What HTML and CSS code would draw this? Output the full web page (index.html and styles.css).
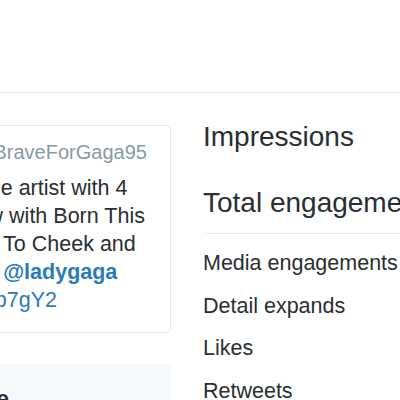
FILE: index.html
```html
<!DOCTYPE html>
<html lang="en">
<head>
  <meta charset="utf-8">
  <title>Tweet activity</title>
  <link rel="stylesheet" href="styles.css">
</head>
<body>
  <div class="header"></div>

  <div class="page">
    <div class="left">
      <div class="tweet">
        <div class="tweet-head"><b class="name">Brave For Gaga ARMY</b> <span class="handle">@BraveForGaga95</span></div>
        <div class="tweet-text">
          Lady Gaga is the first female artist with 4<br>
          consecutive #1 albums now with Born This<br>
          Way, ARTPOP, then Cheek To Cheek and<br>
          Joanne!! congratulations to <a class="mention">@ladygaga</a><br>
          <a class="link">#Joanne</a> <a class="link">https://t.co/4qkLNb7gY2</a>
        </div>
      </div>

      <div class="promote">
        <h3>Reach a bigger audience</h3>
      </div>
    </div>

    <div class="right">
      <div class="metric big">Impressions</div>
      <div class="metric big last">Total engagements</div>
      <div class="details">
        <div class="metric">Media engagements</div>
        <div class="metric">Detail expands</div>
        <div class="metric">Likes</div>
        <div class="metric">Retweets</div>
      </div>
    </div>
  </div>
</body>
</html>
```

FILE: styles.css
```css
body {
  margin: 0;
  font-family: "Liberation Sans", Arial, sans-serif;
  background: #fff;
  color: #292f33;
  overflow: hidden;
}
.header {
  height: 92px;
  border-bottom: 1px solid #e6e9eb;
}
.page {
  display: flex;
  gap: 32px;
  margin-left: -280px;
  white-space: nowrap;
}
.left {
  width: 451px;
  flex-shrink: 0;
  padding-top: 32px;
}
.tweet {
  border: 1px solid #e1e8ed;
  border-radius: 5px;
  padding: 15px 18px 18px 18px;
}
.tweet-head {
  font-size: 20px;
  line-height: 22px;
  margin-bottom: 10.5px;
}
.name {
  color: #292f33;
  font-size: 21.5px;
}
.handle {
  color: #8899a6;
}
.tweet-text {
  font-size: 21.5px;
  line-height: 28px;
}
.mention {
  color: #2b7bb9;
  font-weight: bold;
}
.link {
  color: #2b7bb9;
}
.promote {
  margin-top: 31px;
  background: #f5f8fa;
  border-radius: 5px;
  height: 80px;
  padding: 0 18px;
}
.promote h3 {
  margin: 0;
  padding-top: 21px;
  font-size: 23px;
  line-height: 28px;
}
.right {
  flex: 1;
  padding-top: 11px;
}
.metric {
  font-size: 21.5px;
  line-height: 24px;
  padding: 9.25px 0;
}
.metric.big {
  font-size: 28px;
  line-height: 32px;
  padding: 17px 0;
}
.metric.last {
  padding-bottom: 14px;
  border-bottom: 1px solid #e6e9eb;
}
.details {
  padding-top: 7.75px;
}
```
